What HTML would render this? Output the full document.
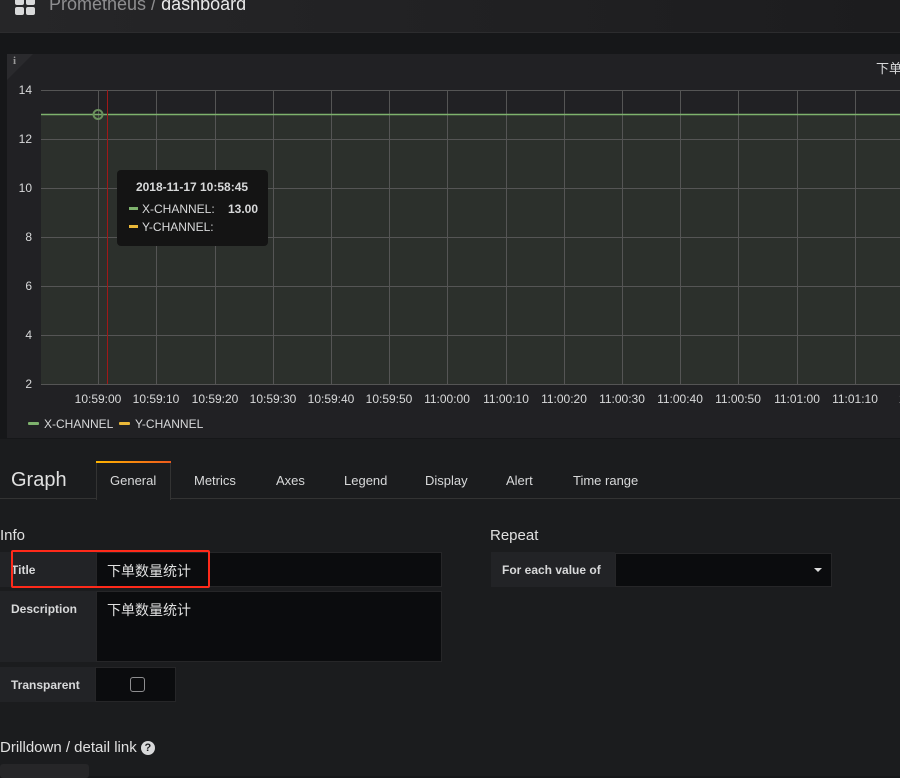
<!DOCTYPE html>
<html><head><meta charset="utf-8"><style>
*{margin:0;padding:0;box-sizing:border-box}
body{width:900px;height:776px;overflow:hidden;background:#161719;font-family:"Liberation Sans","Noto Sans CJK SC",sans-serif;color:#d8d9da;position:relative}
.abs{position:absolute;white-space:nowrap}
.hdr{left:0;top:0;width:900px;height:33px;background:linear-gradient(90deg,#262628,#1c1c1e);border-bottom:1px solid #2c2c2e}
.lbl{background:#222326;color:#d8d9da;font-size:12px;font-weight:bold;display:flex;align-items:center;padding-left:11px}
.inp{background:#0b0c0e;border:1px solid #262628;color:#e0e0e0;font-size:14px}
</style></head><body>
<div class="abs hdr">
 <div class="abs" style="left:15px;top:-4px;width:9px;height:9px;background:#d8d9da;border-radius:2px"></div>
 <div class="abs" style="left:26px;top:-4px;width:9px;height:9px;background:#d8d9da;border-radius:2px"></div>
 <div class="abs" style="left:15px;top:7px;width:9px;height:8px;background:#d8d9da;border-radius:2px"></div>
 <div class="abs" style="left:26px;top:7px;width:9px;height:8px;background:#d8d9da;border-radius:2px"></div>
 <div class="abs" style="left:49px;top:-6px;font-size:18px;color:#8e8e90">Prometheus / <span style="color:#e8e8e8">dashboard</span></div>
</div>
<div class="abs" style="left:7px;top:54px;width:893px;height:384px;background:#212124"></div>
<div class="abs" style="left:7px;top:54px;width:0;height:0;border-top:26px solid #2a2a2d;border-right:26px solid transparent"></div>
<div class="abs" style="left:13px;top:55px;font-size:11px;font-weight:bold;color:#999;font-family:'Liberation Serif',serif">i</div>
<div class="abs" style="left:876px;top:58px;font-size:13px;color:#d8d9da">下单</div>
<svg class="abs" style="left:0;top:0" width="900" height="440" font-family="Liberation Sans, sans-serif" font-size="12" fill="#d8d9da">
 <rect x="41" y="114" width="859" height="270" fill="#2c302c"/>
 <g stroke="#555" stroke-width="1">
  <line x1="41" y1="90.5" x2="900" y2="90.5"/><line x1="41" y1="139.5" x2="900" y2="139.5"/><line x1="41" y1="188.5" x2="900" y2="188.5"/><line x1="41" y1="237.5" x2="900" y2="237.5"/><line x1="41" y1="286.5" x2="900" y2="286.5"/><line x1="41" y1="335.5" x2="900" y2="335.5"/><line x1="41" y1="384.5" x2="900" y2="384.5"/>
  <line x1="98.5" y1="90" x2="98.5" y2="384"/><line x1="156.5" y1="90" x2="156.5" y2="384"/><line x1="215.5" y1="90" x2="215.5" y2="384"/><line x1="273.5" y1="90" x2="273.5" y2="384"/><line x1="331.5" y1="90" x2="331.5" y2="384"/><line x1="389.5" y1="90" x2="389.5" y2="384"/><line x1="447.5" y1="90" x2="447.5" y2="384"/><line x1="506.5" y1="90" x2="506.5" y2="384"/><line x1="564.5" y1="90" x2="564.5" y2="384"/><line x1="622.5" y1="90" x2="622.5" y2="384"/><line x1="680.5" y1="90" x2="680.5" y2="384"/><line x1="738.5" y1="90" x2="738.5" y2="384"/><line x1="797.5" y1="90" x2="797.5" y2="384"/><line x1="855.5" y1="90" x2="855.5" y2="384"/>
 </g>
 <line x1="41" y1="114.5" x2="900" y2="114.5" stroke="#7eb26d" stroke-width="1.5"/>
 <line x1="107.5" y1="90" x2="107.5" y2="384" stroke="#a01818"/>
 <circle cx="98" cy="114.5" r="4.5" fill="none" stroke="#6a8f5c" stroke-width="2"/>
 <g text-anchor="end"><text x="32" y="94">14</text><text x="32" y="143">12</text><text x="32" y="192">10</text><text x="32" y="241">8</text><text x="32" y="290">6</text><text x="32" y="339">4</text><text x="32" y="388">2</text></g>
 <g text-anchor="middle"><text x="98" y="403">10:59:00</text><text x="156" y="403">10:59:10</text><text x="215" y="403">10:59:20</text><text x="273" y="403">10:59:30</text><text x="331" y="403">10:59:40</text><text x="389" y="403">10:59:50</text><text x="447" y="403">11:00:00</text><text x="506" y="403">11:00:10</text><text x="564" y="403">11:00:20</text><text x="622" y="403">11:00:30</text><text x="680" y="403">11:00:40</text><text x="738" y="403">11:00:50</text><text x="797" y="403">11:01:00</text><text x="855" y="403">11:01:10</text><text x="905" y="403">11</text></g>
 <rect x="28" y="422" width="11" height="3" rx="1" fill="#7eb26d"/><text x="44" y="428">X-CHANNEL</text>
 <rect x="119" y="422" width="11" height="3" rx="1" fill="#eab839"/><text x="135" y="428">Y-CHANNEL</text>
 <rect x="117" y="170" width="151" height="76" rx="4" fill="#141414"/>
 <text x="192" y="191" text-anchor="middle" font-weight="bold">2018-11-17 10:58:45</text>
 <rect x="129" y="207" width="9" height="3" fill="#7eb26d"/><text x="142" y="213">X-CHANNEL:</text><text x="258" y="213" text-anchor="end" font-weight="bold">13.00</text>
 <rect x="129" y="225" width="9" height="3" fill="#eab839"/><text x="142" y="231">Y-CHANNEL:</text>
</svg>
<div class="abs" style="left:0;top:439px;width:900px;height:337px;background:#1b1c1e"></div>
<div class="abs" style="left:0;top:498px;width:900px;height:1px;background:#333"></div>
<div class="abs" style="left:11px;top:469px;font-size:20px;color:#e0e0e0">Graph</div>
<div class="abs" style="left:96px;top:461px;width:75px;height:39px;background:#1b1c1e;border:1px solid #333;border-bottom:none;border-top:none"></div>
<div class="abs" style="left:96px;top:461px;width:75px;height:2px;background:linear-gradient(90deg,#ffb400,#ee5a1c)"></div>
<div class="abs" style="top:473px;font-size:13px;color:#d8d9da;left:110px">General</div>
<div class="abs" style="top:473px;font-size:13px;color:#d8d9da;left:194px">Metrics</div>
<div class="abs" style="top:473px;font-size:13px;color:#d8d9da;left:276px">Axes</div>
<div class="abs" style="top:473px;font-size:13px;color:#d8d9da;left:344px">Legend</div>
<div class="abs" style="top:473px;font-size:13px;color:#d8d9da;left:425px">Display</div>
<div class="abs" style="top:473px;font-size:13px;color:#d8d9da;left:506px">Alert</div>
<div class="abs" style="top:473px;font-size:13px;color:#d8d9da;left:573px">Time range</div>
<div class="abs" style="left:0;top:527px;font-size:15px;color:#e0e0e0">Info</div>
<div class="abs" style="left:490px;top:527px;font-size:15px;color:#e0e0e0">Repeat</div>
<div class="abs lbl" style="left:0;top:552px;width:96px;height:35px">Title</div>
<div class="abs inp" style="left:96px;top:552px;width:346px;height:35px;padding:8px 10px">下单数量统计</div>
<div class="abs" style="left:11px;top:550px;width:199px;height:38px;border:2px solid #ff2a1a;border-radius:2px"></div>
<div class="abs lbl" style="left:0;top:591px;width:96px;height:71px;align-items:flex-start;padding-top:11px">Description</div>
<div class="abs inp" style="left:96px;top:591px;width:346px;height:71px;padding:8px 10px">下单数量统计</div>
<div class="abs lbl" style="left:0;top:667px;width:95px;height:35px">Transparent</div>
<div class="abs inp" style="left:95px;top:667px;width:81px;height:35px"><div class="abs" style="left:34px;top:9px;width:15px;height:15px;border:1px solid #8e8e90;border-radius:3px"></div></div>
<div class="abs lbl" style="left:491px;top:552px;width:124px;height:35px">For each value of</div>
<div class="abs inp" style="left:615px;top:553px;width:217px;height:34px"><div class="abs" style="right:9px;top:14px;border-left:4px solid transparent;border-right:4px solid transparent;border-top:4px solid #ddd"></div></div>
<div class="abs" style="left:0;top:739px;font-size:15px;color:#e0e0e0">Drilldown / detail link <span style="display:inline-block;width:14px;height:14px;border-radius:50%;background:#d8d9da;color:#1b1c1e;font-size:11px;font-weight:bold;text-align:center;line-height:14px;vertical-align:1px">?</span></div>
<div class="abs" style="left:0;top:764px;width:89px;height:14px;background:#262628;border-radius:3px"></div>
</body></html>
